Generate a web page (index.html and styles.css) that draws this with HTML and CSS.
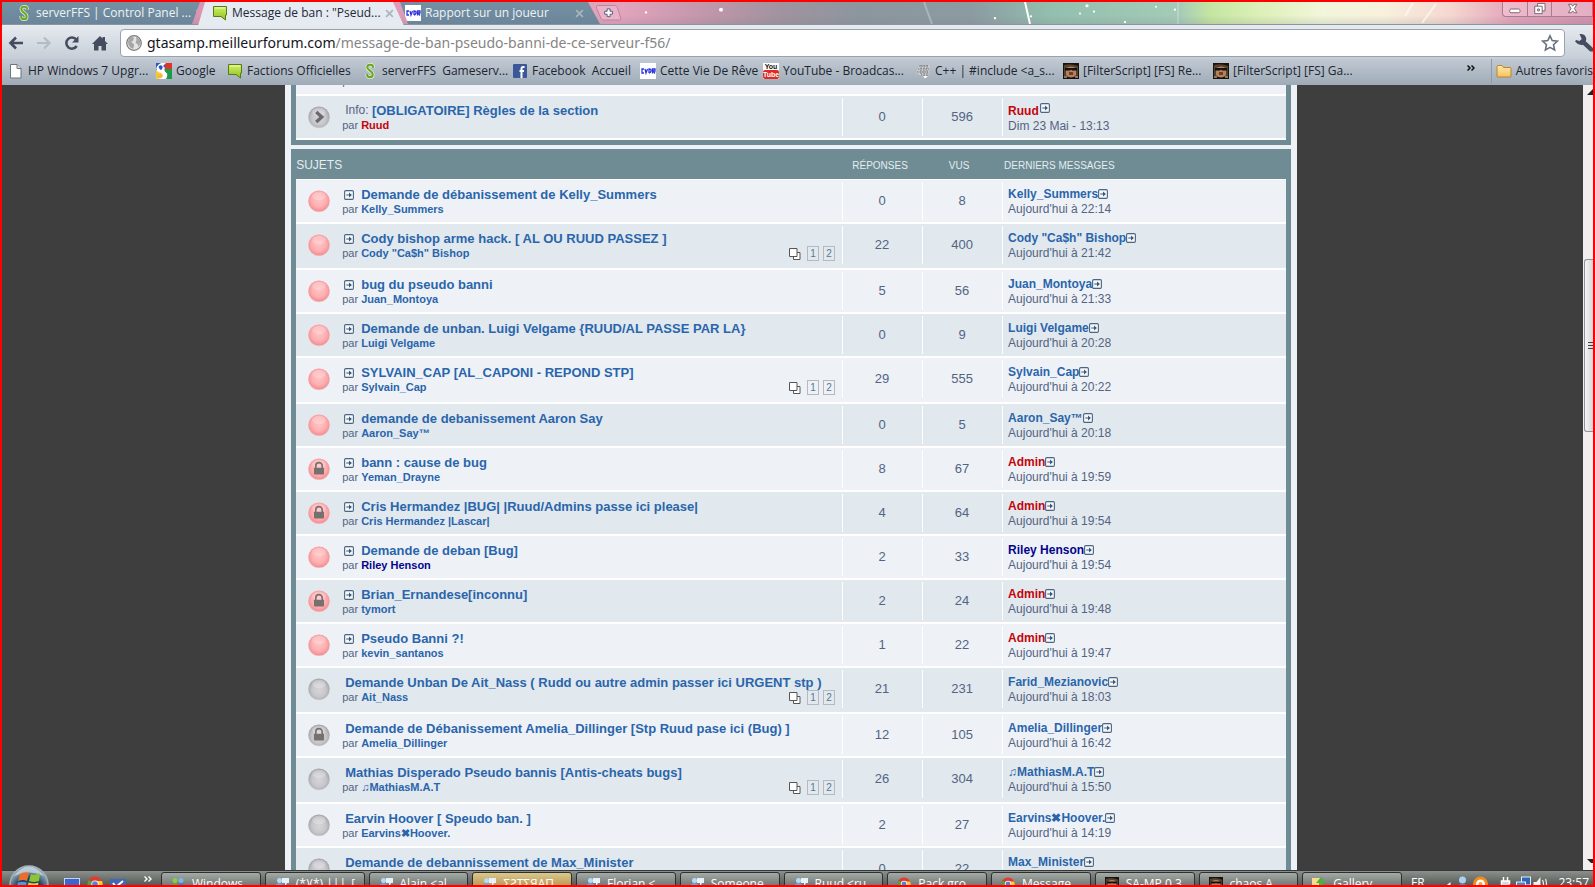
FILE: index.html
```html
<!DOCTYPE html>
<html lang="fr">
<head>
<meta charset="utf-8">
<title>Message de ban : "Pseudo banni de ce serveur"</title>
<link rel="stylesheet" href="styles.css">
</head>
<body>
<svg class="defs" aria-hidden="true">
  <defs>
    <radialGradient id="gRed" cx="50%" cy="45%" r="52%"><stop offset="0" stop-color="#ffc4c4"/><stop offset=".65" stop-color="#fdb0b2"/><stop offset="1" stop-color="#f98e93"/></radialGradient>
    <radialGradient id="gGrey" cx="50%" cy="55%" r="52%"><stop offset="0" stop-color="#d6d6da"/><stop offset=".65" stop-color="#c6c6cb"/><stop offset="1" stop-color="#a6a6ab"/></radialGradient>
    <linearGradient id="gGreen" x1="0" y1="0" x2="0" y2="1"><stop offset="0" stop-color="#d4ee6a"/><stop offset="1" stop-color="#8cc21c"/></linearGradient>
    <linearGradient id="gFolder" x1="0" y1="0" x2="0" y2="1"><stop offset="0" stop-color="#ffe9a8"/><stop offset="1" stop-color="#f8c25c"/></linearGradient>
    <radialGradient id="gOrb" cx="50%" cy="70%" r="60%"><stop offset="0" stop-color="#3b7fb4"/><stop offset=".6" stop-color="#1c3c58"/><stop offset="1" stop-color="#8ea6b4"/></radialGradient>
  </defs>
  <symbol id="red" viewBox="0 0 24 24"><circle cx="12" cy="12.500" r="11.800" fill="#e3d3d8"/><circle cx="12" cy="12" r="11.500" fill="url(#gRed)"/><ellipse cx="12" cy="6.500" rx="7.500" ry="4.500" fill="#fff" opacity=".22"/></symbol>
  <symbol id="grey" viewBox="0 0 24 24"><circle cx="12" cy="12.500" r="11.800" fill="#d0d4d8"/><circle cx="12" cy="12" r="11.500" fill="url(#gGrey)"/><ellipse cx="12" cy="6.500" rx="7.500" ry="4.500" fill="#fff" opacity=".25"/></symbol>
  <symbol id="lock" viewBox="0 0 24 24"><path d="M8.500 11V8.500a3.500 3.500 0 0 1 7 0V11" fill="none" stroke="#77706f" stroke-width="1.800"/><rect x="6.500" y="10.500" width="11" height="7.500" rx="1" fill="#77706f"/></symbol>
  <symbol id="chev" viewBox="0 0 24 24"><path d="M9 6.500l6 5.500-6 5.500" fill="none" stroke="#6a6a6c" stroke-width="3.600"/></symbol>
  <symbol id="go" viewBox="0 0 10 10"><rect x=".600" y=".600" width="8.800" height="8.800" rx="1.200" fill="#f4f8fb" stroke="#4c6580" stroke-width="1.100"/><path d="M2.300 4.400h2.700V2.500L7.900 5 5 7.500V5.600H2.300z" fill="#3d5876"/></symbol>
  <symbol id="pages" viewBox="0 0 12 12"><path d="M4.500 4.500h6.500v7H4.500z" fill="#fff" stroke="#555"/><path d="M.500 .500h7.500v8H.500z" fill="#fff" stroke="#555"/></symbol>
  <symbol id="ffs" viewBox="0 0 16 16"><path d="M11 4.800V3.800C11 2.300 9.800 1.800 8.300 1.800 6.500 1.800 5.300 2.600 5.300 4.200c0 3.400 5.400 3.600 5.400 7.200 0 1.700-1 2.700-2.700 2.700s-2.800-.8-2.800-2.400v-.800" fill="none" stroke="#e4f0cc" stroke-width="3.600"/><path d="M11 4.800V3.800C11 2.300 9.800 1.800 8.300 1.800 6.500 1.800 5.300 2.600 5.300 4.200c0 3.400 5.400 3.600 5.400 7.200 0 1.700-1 2.700-2.700 2.700s-2.800-.8-2.800-2.400v-.800" fill="none" stroke="#6aa52c" stroke-width="2.100"/></symbol>
  <symbol id="bubble" viewBox="0 0 16 16"><path d="M1.500 1.500h13v8.500h-1v5L9 11.500H1.500z" fill="url(#gGreen)" stroke="#557d10"/><path d="M3 3h10" stroke="#eef9b0"/></symbol>
  <symbol id="cvdr" viewBox="0 0 16 16"><rect width="16" height="16" fill="#fff"/><path d="M4 6H2v4h2M5 6l1 4 1.500-4M9 10V6q2.500 0 2 2t-2 2M12.500 10.500V6H15v2h-2l2 2.500" fill="none" stroke="#2a34e0" stroke-width="1.300"/></symbol>
  <symbol id="x" viewBox="0 0 8 8"><path d="M1 1l6 6M7 1L1 7" stroke="#a9b6bf" stroke-width="1.500"/></symbol>
  <symbol id="doc" viewBox="0 0 16 16"><path d="M2.500 1.500h6.500l4 4v9.500H2.500z" fill="#fff" stroke="#6d747b"/><path d="M9 1.500v4h4" fill="#ddd" stroke="#6d747b"/></symbol>
  <symbol id="google" viewBox="0 0 16 16"><path d="M0 0h9v7H0z" fill="#2a55c8"/><path d="M9 0h7v6H9z" fill="#e0332a"/><path d="M9 6h7v10H9z" fill="#1b9a48"/><path d="M0 7h9v9H0z" fill="#f5c83a"/><path d="M10 0L7 3q3 1.500 1 4.500l3 3q1 3.500-1.500 5.500H0q6 0 6.500-3T3 9.500Q-1 7 1 3.500 3 0 6 0z" fill="#fff"/><path d="M2.500 4q1-2.500 3-1.500t.5 3.500-3.500-2z" fill="#2a55c8"/><path d="M1 13q1.500-2.500 5-1.500 1.500 2-1 3.500-3.500 0-4-2z" fill="#f5b83a"/></symbol>
  <symbol id="fb" viewBox="0 0 16 16"><rect x="1" y="1" width="14" height="14" rx="1" fill="#3b5998"/><path d="M12.500 4H11q-1.500 0-1.500 2v9M7.500 8h4.500" fill="none" stroke="#fff" stroke-width="2"/></symbol>
  <symbol id="grid" viewBox="0 0 16 16"><path d="M4 2h11l-2 12H9L1 10z" fill="#c9ccd0"/><path d="M4 3h10M3 6h11M2 9h11M6 12h7M6 2v9M9 2v12M12 2v12" stroke="#777" stroke-dasharray="1.500 1"/><path d="M8 13h5l-3 2.500z" fill="#fff"/></symbol>
  <symbol id="face" viewBox="0 0 16 16"><rect width="16" height="16" fill="#17120f"/><path d="M1 2q7-2 14 1v11H1z" fill="#55412f"/><path d="M3 5q5-3 10 0v7q-5 5-10 0z" fill="#b88058"/><path d="M2 5h12v2.500H9L8 6.500 7 7.500H2z" fill="#111"/><rect x="6" y="9" width="4" height="3" fill="#6b3f2a"/><path d="M1 13h3v2H1zM12 13h3v2h-3z" fill="#8d7660"/></symbol>
  <symbol id="folder" viewBox="0 0 16 16"><path d="M1 3.500q0-1 1-1h4l1.500 2H14q1 0 1 1V13q0 1-1 1H2q-1 0-1-1z" fill="url(#gFolder)" stroke="#bd8430"/></symbol>
  <symbol id="msn" viewBox="0 0 14 14"><circle cx="4.500" cy="3.500" r="2.500" fill="#b4dcf4"/><path d="M0 12q0-6 4.500-6T9 12z" fill="#6aa8da"/><path d="M7 1h7v5h-2l-2 4V6H7z" fill="#e4f2fb"/></symbol>
  <symbol id="buddies" viewBox="0 0 14 14"><circle cx="4" cy="3.500" r="2.500" fill="#8ccb50"/><path d="M0 12q0-6 4-6t4 6z" fill="#62a536"/><circle cx="10" cy="3.500" r="2.500" fill="#74b9e6"/><path d="M6 12q0-6 4-6t4 6z" fill="#3c83bd"/></symbol>
  <symbol id="chrome" viewBox="0 0 16 16"><circle cx="8" cy="8" r="7.500" fill="#e23b2e"/><path d="M1.500 4.300A7.500 7.500 0 0 0 8 15.500L10 8z" fill="#44a847"/><path d="M15 5a7.500 7.500 0 0 1-7 10.500L10.500 8 8 5z" fill="#f7cf34"/><circle cx="8" cy="8" r="3.600" fill="#fff"/><circle cx="8" cy="8" r="2.800" fill="#4a86d8"/></symbol>
</svg>

<div class="screen">
  <header class="titlebar">
    <nav class="tabs">
      <a class="tab" href="#"><svg class="fav"><use href="#ffs"/></svg><span>serverFFS | Control Panel ...</span><svg class="close"><use href="#x"/></svg></a>
      <a class="tab active" href="#"><svg class="fav"><use href="#bubble"/></svg><span>Message de ban : "Pseud...</span><svg class="close"><use href="#x"/></svg></a>
      <a class="tab third" href="#"><svg class="fav"><use href="#cvdr"/></svg><span>Rapport sur un joueur</span><svg class="close"><use href="#x"/></svg></a>
      <button class="newtab" aria-label="Nouvel onglet"><svg viewBox="0 0 28 18"><path d="M3 1.500h17q2 0 3 2l3.500 11q.5 2-1.500 2H9q-2 0-3-2L1.500 4Q1 1.500 3 1.500z" fill="#e9b2c6" stroke="#b88499"/><path d="M12.500 5h3v2.500H18v3h-2.500V13h-3v-2.500H10v-3h2.500z" fill="#fff" stroke="#545e80"/></svg></button>
    </nav>
    <svg class="sparks" viewBox="0 0 880 23" preserveAspectRatio="none" aria-hidden="true"><path d="M403 0l5 23" stroke="#fff" stroke-width="2"/><path d="M302 0l8 23M556 0v23" stroke="#cfe6dc" opacity=".4" stroke-width="2"/><path d="M800 22l14-20M783 15l8-14" stroke="#fff" stroke-width="2" opacity=".6"/><g fill="#fff"><circle cx="99" cy="8" r="2"/><circle cx="24" cy="11" r="1.200"/><circle cx="373" cy="17" r="1.200"/><circle cx="409" cy="15" r="1.200"/><circle cx="465" cy="4" r="1.600"/><circle cx="472" cy="10" r="1.200"/><circle cx="458" cy="12" r="1"/><circle cx="503" cy="21" r="1.200"/><circle cx="534" cy="5" r="1"/><circle cx="553" cy="8" r="1.200"/></g></svg>
    <div class="winbtns">
      <button aria-label="Réduire"><svg viewBox="0 0 24 15"><rect x="6.500" y="7.500" width="11" height="4" rx="1.500" fill="#fff" stroke="#74606c"/></svg></button>
      <button aria-label="Restaurer"><svg viewBox="0 0 24 15"><path d="M9.500 1.500h8v8h-8z" fill="#fff" stroke="#74606c"/><path d="M6.500 4.500h8v8h-8z" fill="#fff" stroke="#74606c"/><path d="M9.500 7.500h2v2h-2z" fill="none" stroke="#74606c"/></svg></button>
      <button class="wide" aria-label="Fermer"><svg viewBox="0 0 38 15"><path d="M15.500 2.500h3l1.500 2 1.500-2h3L21.800 7l2.700 4.500h-3L20 9.500l-1.500 2h-3L18.200 7z" fill="#fff" stroke="#74606c"/></svg></button>
    </div>
  </header>

  <div class="toolbar">
    <button class="nav" aria-label="Précédent"><svg viewBox="0 0 16 16"><path d="M8 2.500L2.500 8 8 13.500M3 8h12" fill="none" stroke="#454c60" stroke-width="2.600"/></svg></button>
    <button class="nav" aria-label="Suivant"><svg viewBox="0 0 16 16"><path d="M8 2.500L13.500 8 8 13.500M13 8H1" fill="none" stroke="#b4bbc4" stroke-width="2.200"/></svg></button>
    <button class="nav" aria-label="Actualiser"><svg viewBox="0 0 16 16"><path d="M12.700 11A5.600 5.600 0 1 1 12.300 4.500" fill="none" stroke="#454c60" stroke-width="2.500"/><path d="M14.500 1v6.500H8z" fill="#454c60"/></svg></button>
    <button class="nav" aria-label="Accueil"><svg viewBox="0 0 16 16"><path d="M8 1l2.500 2.500V2h2.500v4L16 9h-2v6.500H9.500V11h-3v4.500H2V9H0z" fill="#454c60"/></svg></button>
    <div class="omnibox">
      <svg class="globe" viewBox="0 0 16 16"><circle cx="8" cy="8" r="7.300" fill="#e4e4e4" stroke="#7b7b7b" stroke-width="1.200"/><path d="M3 3q4-2 5 0l-1 3-2 1 3 2v2l-1 3Q2 12 2 7zM10 2q4 1 4.500 6l-2 4-1-3-2-1 1-3z" fill="#a6a6a6"/></svg>
      <div class="url" role="textbox" aria-label="Adresse"><span class="host">gtasamp.meilleurforum.com</span>/message-de-ban-pseudo-banni-de-ce-serveur-f56/</div>
      <svg class="star" viewBox="0 0 18 18"><path d="M9 1.800l2.200 4.800 5.200.600-3.900 3.500 1.100 5.200L9 13.300l-4.600 2.600 1.100-5.200L1.600 7.200l5.200-.600z" fill="#fff" stroke="#69717e" stroke-width="1.600"/></svg>
    </div>
    <button class="wrench" aria-label="Outils"><svg viewBox="0 0 16 16"><path d="M4 0q5-.500 6 4 0 1.500-.500 2.500L16 12.500v3h-2.500L7 9.500Q3 10.500 0 6.500l1-1.200 3 1L6 4.500z" fill="#454c60"/></svg></button>
  </div>

  <nav class="bookmarks">
    <a href="#"><svg><use href="#doc"/></svg>HP Windows 7 Upgr...</a>
    <a href="#"><svg><use href="#google"/></svg>Google</a>
    <a href="#"><svg><use href="#bubble"/></svg>Factions Officielles</a>
    <a href="#"><svg><use href="#ffs"/></svg>serverFFS&nbsp; Gameserv...</a>
    <a href="#"><svg><use href="#fb"/></svg>Facebook&nbsp; Accueil</a>
    <a href="#"><svg><use href="#cvdr"/></svg>Cette Vie De Rêve</a>
    <a href="#"><span class="yt"><b>You</b><i>Tube</i></span>YouTube - Broadcas...</a>
    <a href="#"><svg><use href="#grid"/></svg>C++ | #include &lt;a_s...</a>
    <a href="#"><svg><use href="#face"/></svg>[FilterScript] [FS] Re...</a>
    <a href="#"><svg><use href="#face"/></svg>[FilterScript] [FS] Ga...</a>
    <button class="more" aria-label="Plus de favoris"><svg viewBox="0 0 8 6"><path d="M.500 .500L3 3 .500 5.500M4.500 .500L7 3 4.500 5.500" fill="none" stroke="#111" stroke-width="1.500"/></svg></button>
    <a class="others" href="#"><svg><use href="#folder"/></svg>Autres favoris</a>
  </nav>

  <div class="view">
    <main class="page">
      <table class="topics">
        <colgroup><col><col class="n"><col class="n"><col class="last"></colgroup>
        <tbody>
        <tr class="b"><td><div class="t"><span class="ball"></span><div><p class="ti">&nbsp;</p><p class="by">par</p></div></div></td><td colspan="3"></td></tr>
        <tr class="a"><td><div class="t"><svg class="ball"><use href="#grey"/><use href="#chev"/></svg><div><p class="ti"><span>Info: </span><a href="#">[OBLIGATOIRE] Règles de la section</a></p><p class="by">par <a class="adm" href="#">Ruud</a></p></div></div></td><td class="c">0</td><td class="c">596</td><td class="l"><a class="adm" href="#">Ruud</a><svg class="go up"><use href="#go"/></svg><br>Dim 23 Mai - 13:13</td></tr>
        </tbody>
      </table>

      <table class="topics">
        <colgroup><col><col class="n"><col class="n"><col class="last"></colgroup>
        <thead><tr><th class="first">SUJETS</th><th class="rep">RÉPONSES</th><th class="vus">VUS</th><th class="der">DERNIERS MESSAGES</th></tr></thead>
        <tbody>
        <tr class="b"><td><div class="t"><svg class="ball"><use href="#red"/></svg><div><p class="ti"><svg class="go"><use href="#go"/></svg><a href="#">Demande de débanissement de Kelly_Summers</a></p><p class="by">par <a href="#">Kelly_Summers</a></p></div></div></td><td class="c">0</td><td class="c">8</td><td class="l"><a href="#">Kelly_Summers</a><svg class="go"><use href="#go"/></svg><br>Aujourd'hui à 22:14</td></tr>
        <tr class="a tall"><td><div class="t"><svg class="ball"><use href="#red"/></svg><div><p class="ti"><svg class="go"><use href="#go"/></svg><a href="#">Cody bishop arme hack. [ AL OU RUUD PASSEZ ]</a></p><p class="by">par <a href="#">Cody "Ca$h" Bishop</a></p></div><div class="pg"><svg><use href="#pages"/></svg><a href="#">1</a><a href="#">2</a></div></div></td><td class="c">22</td><td class="c">400</td><td class="l"><a href="#">Cody "Ca$h" Bishop</a><svg class="go"><use href="#go"/></svg><br>Aujourd'hui à 21:42</td></tr>
        <tr class="b"><td><div class="t"><svg class="ball"><use href="#red"/></svg><div><p class="ti"><svg class="go"><use href="#go"/></svg><a href="#">bug du pseudo banni</a></p><p class="by">par <a href="#">Juan_Montoya</a></p></div></div></td><td class="c">5</td><td class="c">56</td><td class="l"><a href="#">Juan_Montoya</a><svg class="go"><use href="#go"/></svg><br>Aujourd'hui à 21:33</td></tr>
        <tr class="a"><td><div class="t"><svg class="ball"><use href="#red"/></svg><div><p class="ti"><svg class="go"><use href="#go"/></svg><a href="#">Demande de unban. Luigi Velgame {RUUD/AL PASSE PAR LA}</a></p><p class="by">par <a href="#">Luigi Velgame</a></p></div></div></td><td class="c">0</td><td class="c">9</td><td class="l"><a href="#">Luigi Velgame</a><svg class="go"><use href="#go"/></svg><br>Aujourd'hui à 20:28</td></tr>
        <tr class="b tall"><td><div class="t"><svg class="ball"><use href="#red"/></svg><div><p class="ti"><svg class="go"><use href="#go"/></svg><a href="#">SYLVAIN_CAP [AL_CAPONI - REPOND STP]</a></p><p class="by">par <a href="#">Sylvain_Cap</a></p></div><div class="pg"><svg><use href="#pages"/></svg><a href="#">1</a><a href="#">2</a></div></div></td><td class="c">29</td><td class="c">555</td><td class="l"><a href="#">Sylvain_Cap</a><svg class="go"><use href="#go"/></svg><br>Aujourd'hui à 20:22</td></tr>
        <tr class="a"><td><div class="t"><svg class="ball"><use href="#red"/></svg><div><p class="ti"><svg class="go"><use href="#go"/></svg><a href="#">demande de debanissement Aaron Say</a></p><p class="by">par <a href="#">Aaron_Say™</a></p></div></div></td><td class="c">0</td><td class="c">5</td><td class="l"><a href="#">Aaron_Say™</a><svg class="go"><use href="#go"/></svg><br>Aujourd'hui à 20:18</td></tr>
        <tr class="b"><td><div class="t"><svg class="ball"><use href="#red"/><use href="#lock"/></svg><div><p class="ti"><svg class="go"><use href="#go"/></svg><a href="#">bann : cause de bug</a></p><p class="by">par <a href="#">Yeman_Drayne</a></p></div></div></td><td class="c">8</td><td class="c">67</td><td class="l"><a class="adm" href="#">Admin</a><svg class="go"><use href="#go"/></svg><br>Aujourd'hui à 19:59</td></tr>
        <tr class="a"><td><div class="t"><svg class="ball"><use href="#red"/><use href="#lock"/></svg><div><p class="ti"><svg class="go"><use href="#go"/></svg><a href="#">Cris Hermandez |BUG| |Ruud/Admins passe ici please|</a></p><p class="by">par <a href="#">Cris Hermandez |Lascar|</a></p></div></div></td><td class="c">4</td><td class="c">64</td><td class="l"><a class="adm" href="#">Admin</a><svg class="go"><use href="#go"/></svg><br>Aujourd'hui à 19:54</td></tr>
        <tr class="b"><td><div class="t"><svg class="ball"><use href="#red"/></svg><div><p class="ti"><svg class="go"><use href="#go"/></svg><a href="#">Demande de deban [Bug]</a></p><p class="by">par <a class="mod" href="#">Riley Henson</a></p></div></div></td><td class="c">2</td><td class="c">33</td><td class="l"><a class="mod" href="#">Riley Henson</a><svg class="go"><use href="#go"/></svg><br>Aujourd'hui à 19:54</td></tr>
        <tr class="a"><td><div class="t"><svg class="ball"><use href="#red"/><use href="#lock"/></svg><div><p class="ti"><svg class="go"><use href="#go"/></svg><a href="#">Brian_Ernandese[inconnu]</a></p><p class="by">par <a href="#">tymort</a></p></div></div></td><td class="c">2</td><td class="c">24</td><td class="l"><a class="adm" href="#">Admin</a><svg class="go"><use href="#go"/></svg><br>Aujourd'hui à 19:48</td></tr>
        <tr class="b"><td><div class="t"><svg class="ball"><use href="#red"/></svg><div><p class="ti"><svg class="go"><use href="#go"/></svg><a href="#">Pseudo Banni ?!</a></p><p class="by">par <a href="#">kevin_santanos</a></p></div></div></td><td class="c">1</td><td class="c">22</td><td class="l"><a class="adm" href="#">Admin</a><svg class="go"><use href="#go"/></svg><br>Aujourd'hui à 19:47</td></tr>
        <tr class="a tall"><td><div class="t"><svg class="ball"><use href="#grey"/></svg><div><p class="ti"><a href="#">Demande Unban De Ait_Nass ( Rudd ou autre admin passer ici URGENT stp )</a></p><p class="by">par <a href="#">Ait_Nass</a></p></div><div class="pg"><svg><use href="#pages"/></svg><a href="#">1</a><a href="#">2</a></div></div></td><td class="c">21</td><td class="c">231</td><td class="l"><a href="#">Farid_Mezianovic</a><svg class="go"><use href="#go"/></svg><br>Aujourd'hui à 18:03</td></tr>
        <tr class="b"><td><div class="t"><svg class="ball"><use href="#grey"/><use href="#lock"/></svg><div><p class="ti"><a href="#">Demande de Débanissement Amelia_Dillinger [Stp Ruud pase ici (Bug) ]</a></p><p class="by">par <a href="#">Amelia_Dillinger</a></p></div></div></td><td class="c">12</td><td class="c">105</td><td class="l"><a href="#">Amelia_Dillinger</a><svg class="go"><use href="#go"/></svg><br>Aujourd'hui à 16:42</td></tr>
        <tr class="a tall"><td><div class="t"><svg class="ball"><use href="#grey"/></svg><div><p class="ti"><a href="#">Mathias Disperado Pseudo bannis [Antis-cheats bugs]</a></p><p class="by">par <a href="#">♫MathiasM.A.T</a></p></div><div class="pg"><svg><use href="#pages"/></svg><a href="#">1</a><a href="#">2</a></div></div></td><td class="c">26</td><td class="c">304</td><td class="l"><a href="#">♫MathiasM.A.T</a><svg class="go"><use href="#go"/></svg><br>Aujourd'hui à 15:50</td></tr>
        <tr class="b"><td><div class="t"><svg class="ball"><use href="#grey"/></svg><div><p class="ti"><a href="#">Earvin Hoover [ Speudo ban. ]</a></p><p class="by">par <a href="#">Earvins✖Hoover.</a></p></div></div></td><td class="c">2</td><td class="c">27</td><td class="l"><a href="#">Earvins✖Hoover.</a><svg class="go"><use href="#go"/></svg><br>Aujourd'hui à 14:19</td></tr>
        <tr class="a"><td><div class="t"><svg class="ball"><use href="#grey"/></svg><div><p class="ti"><a href="#">Demande de debannissement de Max_Minister</a></p></div></div></td><td class="c">0</td><td class="c">22</td><td class="l"><a href="#">Max_Minister</a><svg class="go"><use href="#go"/></svg></td></tr>
        </tbody>
      </table>
    </main>
    <div class="scroll" aria-hidden="true">
      <svg class="arrow" viewBox="0 0 10 6"><path d="M10 0v6H4z" fill="#222"/></svg>
      <span class="thumb"><i></i><i></i><i></i></span>
      <svg class="arrow" viewBox="0 0 10 6"><path d="M4 0h6v4H8z" fill="#222"/></svg>
    </div>
  </div>

  <footer class="taskbar">
    <button class="orb" aria-label="Démarrer"><svg viewBox="0 0 40 20"><circle cx="20" cy="20" r="19" fill="url(#gOrb)" stroke="#9fb0b8" stroke-width="1.500"/><path d="M5 11Q20-8 35 11 20 4 5 11z" fill="#dbe8f0" opacity=".6"/><path d="M11 9q5-3 9-1l-2 8q-4-2-9 0z" fill="#e8702c"/><path d="M22 9q4 2 9-1l-1 8q-5 2-10 0z" fill="#8cc43c"/><path d="M9 17.500q4-1.500 8.500 0l-.500 3H8z" fill="#4a9ae0"/><path d="M19.500 17.500q5 2 10 0l-.5 3H19z" fill="#f6cf3c"/></svg></button>
    <div class="quick">
      <svg viewBox="0 0 16 12"><rect x=".500" y="2.500" width="15" height="9" fill="#3a66d0" stroke="#c8d4e4"/></svg>
      <svg viewBox="0 0 16 16"><use href="#chrome"/></svg>
      <svg viewBox="0 0 16 12"><rect x="0" y="3" width="16" height="9" fill="#3c6ab4"/><path d="M3 7l3 4 7-6" fill="none" stroke="#fff" stroke-width="2"/></svg>
      <svg class="qmore" viewBox="0 0 8 6"><path d="M.500 .500L3 3 .500 5.500M4.500 .500L7 3 4.500 5.500" fill="none" stroke="#fff" stroke-width="1.400"/></svg>
    </div>
    <div class="tasks">
      <button><svg><use href="#buddies"/></svg>Windows ...</button>
      <button><svg><use href="#msn"/></svg>(*)(*) |||_[...</button>
      <button><svg><use href="#msn"/></svg>Alain &lt;al...</button>
      <button class="hot"><svg><use href="#msn"/></svg>ΣƧTΣЯAП...</button>
      <button><svg><use href="#msn"/></svg>Florian &lt;...</button>
      <button><svg><use href="#msn"/></svg>Someone ...</button>
      <button><svg><use href="#msn"/></svg>Ruud &lt;ru...</button>
      <button><svg><use href="#chrome"/></svg>Pack gro...</button>
      <button><svg><use href="#chrome"/></svg>Message ...</button>
      <button><svg><use href="#face"/></svg>SA-MP 0.3...</button>
      <button><svg><use href="#face"/></svg>chaos A...</button>
      <button><svg viewBox="0 0 14 14"><path d="M0 1h8v13H0z" fill="#f6dd8c"/><path d="M9 0l5 6h-3v6H7V6H4z" fill="#4cb043"/></svg>Gallery ...</button>
    </div>
    <div class="tray">
      <span class="lang">FR</span>
      <svg viewBox="0 0 16 14"><path d="M12 7l-6 5 6 5z" fill="#fff"/></svg>
      <svg viewBox="0 0 16 14"><circle cx="7" cy="5" r="3.500" fill="#a9d2ee"/><path d="M1 14q0-5 6-5t6 5z" fill="#4d8fc8"/><path d="M9 10h5v3H9z" fill="#f5c63c"/></svg>
      <svg viewBox="0 0 16 14"><circle cx="8" cy="9" r="6" fill="#fff" stroke="#f28a1c" stroke-width="3"/><circle cx="8" cy="9" r="2" fill="#f6a63a"/></svg>
      <svg class="gap" viewBox="0 0 16 14"><path d="M5 2v4M9 2v4M3 6h8v4q-1 3-4 3t-4-3z" stroke="#fff" fill="#d8d8d8" stroke-width="1.500"/><path d="M9 14q0-5 4-5t3 5z" fill="#d8282a"/></svg>
      <svg viewBox="0 0 16 14"><rect x="6" y="2" width="9" height="8" fill="#2c66b8" stroke="#e6eef6"/><rect x="1" y="7" width="9" height="7" fill="#3f8ad0" stroke="#e6eef6"/></svg>
      <svg viewBox="0 0 16 14"><path d="M1 7h3l4-5v14l-4-4H1z" fill="#f2f2f2"/><path d="M10 5q2 4 0 9M13 4q2 5 0 10" stroke="#e8e8e8" fill="none" stroke-width="1.300"/></svg>
      <span class="clock">23:57</span>
    </div>
  </footer>
</div>
</body>
</html>
```

FILE: styles.css
```css
* { box-sizing: border-box; }
body { margin: 0; font-family: "Liberation Sans", Arial, sans-serif; }
a { text-decoration: none; color: inherit; }
button { border: 0; padding: 0; background: none; font: inherit; color: inherit; }
p { margin: 0; }
svg { display: block; flex: none; }
.defs { position: absolute; width: 0; height: 0; }

.screen { display: flex; flex-direction: column; height: 100vh; border: 2px solid #fe0000; overflow: hidden; background: #3e3e3e; }

/* title bar and tabs */
.titlebar {
  display: flex; flex: none; height: 23px; border-bottom: 1px solid #8c959f;
  font: 12px/22px "Open Sans", "Noto Sans", sans-serif;
  background:
    linear-gradient(180deg, rgba(255,255,255,0) 60%, rgba(120,120,130,.18)),
    linear-gradient(90deg, #d78fae 0, #e3a3bd 39%, #c397ab 44%, #a0939f 49%, #8c969f 54%, #8b9ba2 61%, #93bfae 66%, #a5cbb8 74%, #c5e6a2 76%, #dcf0b7 79%, #f2f6da 83%, #f8f0dd 87%, #f5d8d0 91%, #e3a3ba 95%, #d592ae 100%);
}
.tabs { display: flex; width: 620px; flex: none; }
.tab { display: flex; align-items: center; width: 204px; margin-right: -8px; padding: 0 12px 0 14px; gap: 4px; color: #eef3f7; background: linear-gradient(#7590a3, #6b869a); clip-path: polygon(0 0, 198px 0, 190px 100%, 0 100%); white-space: nowrap; }
.tab .fav { width: 16px; height: 16px; }
.tab .close { width: 9px; height: 9px; margin-left: auto; }
.tab span { flex: 0 1 auto; }
.tab.active { width: 210px; height: 24px; padding: 0 18px 2px 14px; gap: 4px; color: #22283a; background: #e6ebf1; clip-path: polygon(7px 0, 195px 0, 206px 100%, 0 100%); z-index: 1; }
.tab.third { width: 206px; margin-right: 0; padding: 0 17px 0 5px; gap: 4px; clip-path: polygon(0 0, 188px 0, 200px 100%, 8px 100%); }
.newtab { width: 28px; height: 18px; margin: 2px 0 0 -6px; }
.sparks { flex: 1; min-width: 0; height: 22px; }
.winbtns { display: flex; width: 91px; height: 15px; border: 1px solid #a57c90; border-top: 0; border-radius: 0 0 0 4px; background: rgba(255,225,235,.35); }
.winbtns button { width: 25px; height: 14px; border-right: 1px solid #a57c90; }
.winbtns button.wide { width: 40px; border: 0; }
.winbtns svg { width: 100%; height: 14px; }

/* address row */
.toolbar { display: flex; align-items: center; flex: none; height: 34px; padding: 1px 0 0 6px; background: linear-gradient(#e6ebf0, #c5cdd6); }
.nav { width: 16px; height: 16px; margin-right: 12px; }
.nav svg { width: 16px; height: 16px; }
.omnibox { display: flex; align-items: center; flex: 1; height: 28px; padding: 0 5px; gap: 5px; background: #fff; border: 1px solid #98a3af; border-radius: 4px; }
.globe { width: 16px; height: 16px; }
.url { flex: 1; min-width: 0; font: 14px/24px "Noto Sans", "Open Sans", sans-serif; color: #858585; white-space: nowrap; }
.host { color: #15151c; }
.star { width: 18px; height: 18px; }
.wrench { width: 18px; height: 18px; margin-left: 10px; }
.wrench svg { width: 18px; height: 18px; }

/* bookmarks */
.bookmarks {
  display: grid; grid-template-columns: 148px 71px 135px 150px 128px 123px 152px 148px 150px 1fr 24px max-content;
  align-items: center; flex: none; height: 26px; padding: 0 0 2px 6px; color: #20242f;
  font: 12px/24px "Open Sans", "Noto Sans", sans-serif;
  background: linear-gradient(#c1c9d3, #9eabb7);
}
.bookmarks a { display: flex; align-items: center; gap: 4px; white-space: nowrap; }
.bookmarks a svg { width: 16px; height: 16px; }
.yt { display: flex; flex-direction: column; width: 16px; height: 16px; background: #fff; font: bold 7px/7px "Liberation Sans", sans-serif; text-align: center; }
.yt b { color: #111; }
.yt i { flex: 1; font-style: normal; line-height: 9px; color: #fff; background: #e02a20; border-radius: 2px; }
.more svg { width: 8px; height: 6px; margin-bottom: 6px; }
.others { border-left: 1px solid #8e9ba6; padding-left: 4px; }

/* page viewport */
.view { display: flex; flex: 1; min-height: 0; overflow: hidden; }
.page { flex: none; width: 63.6%; height: 1000px; margin: -33px auto 0 17.8%; padding: 0 6px; background: #eef2f6; }
.topics { width: 100%; table-layout: fixed; border-collapse: separate; border-spacing: 0; border: 5px solid #6f8b93; border-top: 0; margin-bottom: 4px; color: #536482; }
.n { width: 80px; }
.last { width: 284px; }
th { height: 30px; padding: 2px 0 0; font-weight: normal; font-size: 10px; color: #e4edf0; background: #6f8b93; }
th.first { text-align: left; font-size: 12px; }
th.rep { padding-right: 4px; }
th.vus { padding-right: 6px; }
th.der { text-align: left; padding-left: 2px; }
td { height: 44px; padding: 0; vertical-align: top; border-bottom: 2px solid #fff; }
.tall td { height: 46px; }
.a td { background-color: #e1e8ee; }
.b td { background-color: #eef2f7; }
thead + tbody tr:first-child td { border-top: 1px solid #fff; height: 45px; }
td.c, td.l { background-image: linear-gradient(#fff, #fff); background-repeat: no-repeat; background-size: 1px 38px; background-position: 0 2px; }
.t { display: flex; position: relative; height: 100%; padding: 7px 0 0 12px; gap: 12px; }
.ball { width: 22px; height: 24px; margin-top: 2px; }
.ti { display: flex; align-items: center; height: 15px; padding-left: 3px; font-size: 13px; line-height: 15px; white-space: pre; }
.ti a { font-weight: bold; }
.ti .go { margin-right: 7px; margin-left: -1px; }
.ti span { font-size: 12px; }
.by { font-size: 11px; line-height: 14px; }
.by a, .l a { font-weight: bold; }
td a { color: #2a65ab; }
td a.adm { color: #c4040c; }
td a.mod { color: #04048c; }
.go { width: 10px; height: 10px; }
.l .go { display: inline-block; vertical-align: -1px; }
.l .go.up { vertical-align: 2px; margin-left: 1px; }
.c { padding-top: 13px; text-align: center; font-size: 13px; line-height: 16px; }
.l { padding: 7px 0 0 6px; font-size: 12px; line-height: 15px; }
.pg { display: flex; align-items: center; gap: 4px; position: absolute; right: 7px; bottom: 7px; }
.pg svg { width: 12px; height: 12px; margin-right: 2px; }
.pg a { width: 12px; height: 15px; border: 1px solid #b4bac0; color: #5c758c; font-size: 10px; line-height: 13px; text-align: center; }

.scroll { display: flex; flex-direction: column; justify-content: space-between; align-items: flex-end; flex: none; width: 10px; margin-left: auto; padding: 4px 0 5px; background: #f0eeee; }
.arrow { width: 10px; height: 6px; }
.thumb { display: flex; flex-direction: column; justify-content: center; align-items: flex-end; gap: 2px; width: 9px; height: 173px; margin-bottom: 264px; border: 1px solid #909396; border-right: 0; border-radius: 3px 0 0 3px; background: linear-gradient(90deg, #f6f6f7, #d4d5da); }
.thumb i { width: 5px; height: 1px; background: #444; }

/* taskbar */
.taskbar { display: flex; position: relative; flex: none; height: 15px; border-top: 1px solid #35383a; background: linear-gradient(#8b908c, #565b58); font: 12px/16px "Open Sans", "Noto Sans", sans-serif; color: #fff; }
.orb { position: absolute; left: 7px; bottom: 0; width: 40px; height: 20px; }
.orb svg { width: 40px; height: 20px; }
.quick { display: flex; flex: none; width: 159px; height: 14px; padding: 5px 0 0 62px; gap: 7px; overflow: hidden; }
.quick svg { width: 16px; height: 16px; }
.quick svg:nth-child(1), .quick svg:nth-child(3) { height: 12px; }
.quick svg.qmore { width: 8px; height: 6px; margin: 0 0 0 11px; }
.tasks { display: flex; flex: none; width: 78%; gap: 4px; height: 14px; overflow: hidden; }
.tasks button { display: flex; flex: 1; min-width: 0; gap: 7px; margin-top: 1px; padding: 3px 0 0 9px; height: 24px; border: 1px solid #2d302f; border-radius: 3px; background: linear-gradient(#a4aaa5, #4d524f); white-space: nowrap; overflow: hidden; }
.tasks button.hot { background: linear-gradient(#dcc88c, #a07830); }
.tasks svg { width: 14px; height: 14px; margin-top: 1px; }
.tray { display: flex; flex: 1; min-width: 0; height: 14px; padding: 4px 4px 0 9px; overflow: hidden; }
.tray svg { width: 17px; height: 14px; }
.tray .gap { margin-left: 9px; }
.lang { width: 27px; }
.clock { margin-left: auto; }
```
